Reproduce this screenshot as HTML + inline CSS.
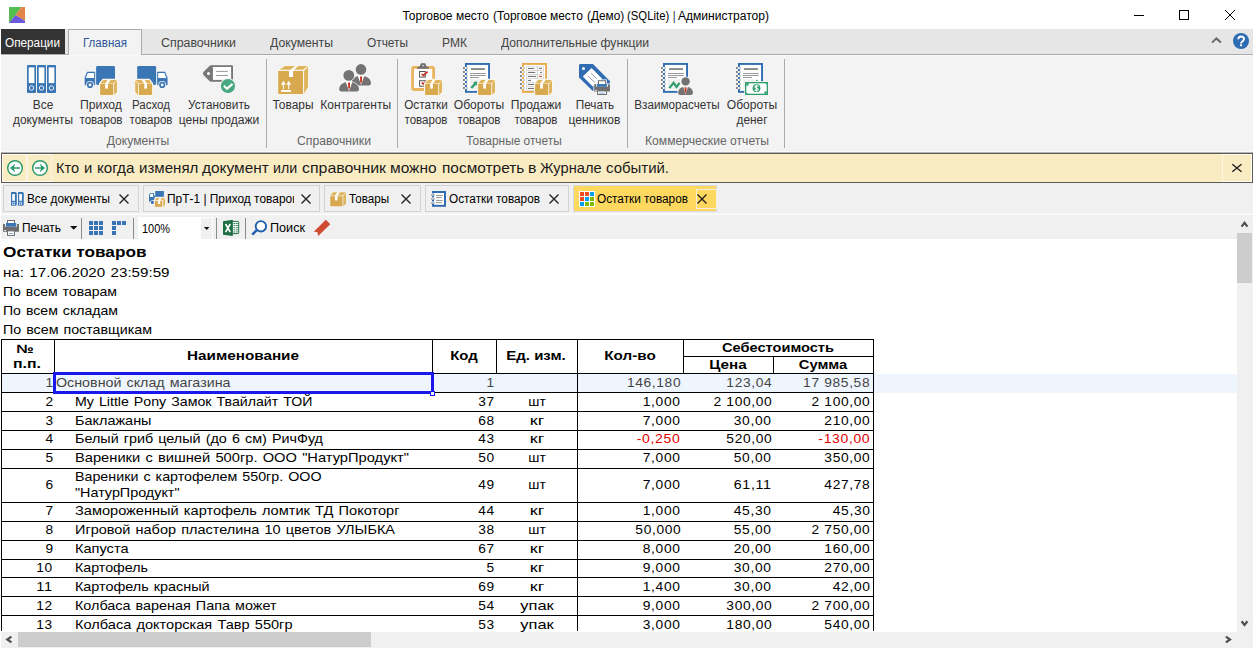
<!DOCTYPE html>
<html><head><meta charset="utf-8"><title>Торговое место</title>
<style>
html,body{margin:0;padding:0;}
body{width:1254px;height:649px;position:relative;overflow:hidden;background:#fff;font-family:"Liberation Sans",sans-serif;}
.a{position:absolute;box-sizing:border-box;}
.t{position:absolute;white-space:pre;font-family:"Liberation Sans",sans-serif;}
svg{position:absolute;overflow:visible;}
</style></head><body>
<svg style="left:9px;top:7px" width="16" height="16" viewBox="0 0 16 16">
<polygon points="0,0 12.5,0 6.5,8 0,16" fill="#53bd4f"/>
<polygon points="12.5,0 16,0 16,14 6.5,8" fill="#e38448"/>
<polygon points="0,16 6.5,8 16,14 16,16" fill="#6a59dc"/>
</svg>
<span class="t" style="top:9px;font-size:12px;line-height:14px;color:#000;left:402.4px;transform-origin:0 0;">Торговое</span>
<span class="t" style="top:9px;font-size:12px;line-height:14px;color:#000;left:455.79999999999995px;transform-origin:0 0;transform:scaleX(0.9949);">место</span>
<span class="t" style="top:9px;font-size:12px;line-height:14px;color:#000;left:492.5px;transform-origin:0 0;transform:scaleX(0.9940);">(Торговое</span>
<span class="t" style="top:9px;font-size:12px;line-height:14px;color:#000;left:549.9px;transform-origin:0 0;">место</span>
<span class="t" style="top:9px;font-size:12px;line-height:14px;color:#000;left:586.6px;transform-origin:0 0;transform:scaleX(0.9862);">(Демо)</span>
<span class="t" style="top:9px;font-size:12px;line-height:14px;color:#000;left:627.1999999999999px;transform-origin:0 0;transform:scaleX(0.9466);">(SQLite)</span>
<span class="t" style="top:9px;font-size:12px;line-height:14px;color:#000;left:672.6999999999999px;transform-origin:0 0;transform:scaleX(0.7680);">|</span>
<span class="t" style="top:9px;font-size:12px;line-height:14px;color:#000;left:677.9px;transform-origin:0 0;transform:scaleX(1.0047);">Администратор)</span>
<svg style="left:1130px;top:5px" width="120" height="22" viewBox="0 0 120 22" fill="none" stroke="#000" stroke-width="1">
<path d="M4 10.5H14"/><rect x="49.5" y="5.5" width="9" height="9"/><path d="M95 5L105 15M105 5L95 15"/></svg>
<div class="a" style="left:1px;top:29px;width:1252px;height:25px;background:#e6e6e6;"></div>
<div class="a" style="left:1px;top:54px;width:1252px;height:1px;background:#ababab;"></div>
<div class="a" style="left:1px;top:55px;width:1252px;height:97px;background:#f3f3f3;"></div>
<div class="a" style="left:1px;top:55px;width:1252px;height:1px;background:#f9f9f9;"></div>
<div class="a" style="left:1px;top:151px;width:1252px;height:1px;background:#fafafa;"></div>
<div class="a" style="left:1px;top:29px;width:64px;height:25px;background:#333333;"></div>
<span class="t" style="top:36px;font-size:12px;line-height:14px;color:#fff;left:5px;transform-origin:0 0;transform:scaleX(0.9797);">Операции</span>
<div class="a" style="left:68px;top:29px;width:74px;height:26px;background:#f3f3f3;border:1px solid #ababab;border-bottom:none;"></div>
<span class="t" style="top:36px;font-size:12px;line-height:14px;color:#2b579a;left:83px;transform-origin:0 0;transform:scaleX(0.9631);">Главная</span>
<span class="t" style="top:36px;font-size:12px;line-height:14px;color:#444;left:161px;transform-origin:0 0;transform:scaleX(1.0316);">Справочники</span>
<span class="t" style="top:36px;font-size:12px;line-height:14px;color:#444;left:269.5px;transform-origin:0 0;transform:scaleX(1.0184);">Документы</span>
<span class="t" style="top:36px;font-size:12px;line-height:14px;color:#444;left:367px;transform-origin:0 0;transform:scaleX(0.9883);">Отчеты</span>
<span class="t" style="top:36px;font-size:12px;line-height:14px;color:#444;left:442px;transform-origin:0 0;transform:scaleX(1.0057);">РМК</span>
<span class="t" style="top:36px;font-size:12px;line-height:14px;color:#444;left:501px;transform-origin:0 0;transform:scaleX(1.0121);">Дополнительные функции</span>
<span class="t" style="top:98px;font-size:12px;line-height:14px;color:#333;left:42.5px;transform-origin:50% 0;transform:translateX(-50%) scaleX(0.9909);">Все</span>
<span class="t" style="top:113px;font-size:12px;line-height:14px;color:#333;left:42.5px;transform-origin:50% 0;transform:translateX(-50%) scaleX(0.9899);">документы</span>
<span class="t" style="top:98px;font-size:12px;line-height:14px;color:#333;left:101.3px;transform-origin:50% 0;transform:translateX(-50%) scaleX(1.0174);">Приход</span>
<span class="t" style="top:113px;font-size:12px;line-height:14px;color:#333;left:101.3px;transform-origin:50% 0;transform:translateX(-50%) scaleX(0.9626);">товаров</span>
<span class="t" style="top:98px;font-size:12px;line-height:14px;color:#333;left:151.3px;transform-origin:50% 0;transform:translateX(-50%) scaleX(0.9605);">Расход</span>
<span class="t" style="top:113px;font-size:12px;line-height:14px;color:#333;left:151.3px;transform-origin:50% 0;transform:translateX(-50%) scaleX(0.9626);">товаров</span>
<span class="t" style="top:98px;font-size:12px;line-height:14px;color:#333;left:219px;transform-origin:50% 0;transform:translateX(-50%) scaleX(0.9844);">Установить</span>
<span class="t" style="top:113px;font-size:12px;line-height:14px;color:#333;left:219px;transform-origin:50% 0;transform:translateX(-50%) scaleX(1.0063);">цены продажи</span>
<span class="t" style="top:98px;font-size:12px;line-height:14px;color:#333;left:293.4px;transform-origin:50% 0;transform:translateX(-50%) scaleX(0.9932);">Товары</span>
<span class="t" style="top:98px;font-size:12px;line-height:14px;color:#333;left:355.7px;transform-origin:50% 0;transform:translateX(-50%);">Контрагенты</span>
<span class="t" style="top:98px;font-size:12px;line-height:14px;color:#333;left:425.8px;transform-origin:50% 0;transform:translateX(-50%) scaleX(0.9762);">Остатки</span>
<span class="t" style="top:113px;font-size:12px;line-height:14px;color:#333;left:425.8px;transform-origin:50% 0;transform:translateX(-50%) scaleX(0.9626);">товаров</span>
<span class="t" style="top:98px;font-size:12px;line-height:14px;color:#333;left:479px;transform-origin:50% 0;transform:translateX(-50%) scaleX(1.0081);">Обороты</span>
<span class="t" style="top:113px;font-size:12px;line-height:14px;color:#333;left:479px;transform-origin:50% 0;transform:translateX(-50%) scaleX(0.9626);">товаров</span>
<span class="t" style="top:98px;font-size:12px;line-height:14px;color:#333;left:536px;transform-origin:50% 0;transform:translateX(-50%) scaleX(1.0075);">Продажи</span>
<span class="t" style="top:113px;font-size:12px;line-height:14px;color:#333;left:536px;transform-origin:50% 0;transform:translateX(-50%) scaleX(0.9626);">товаров</span>
<span class="t" style="top:98px;font-size:12px;line-height:14px;color:#333;left:594.5px;transform-origin:50% 0;transform:translateX(-50%) scaleX(0.9793);">Печать</span>
<span class="t" style="top:113px;font-size:12px;line-height:14px;color:#333;left:594.5px;transform-origin:50% 0;transform:translateX(-50%);">ценников</span>
<span class="t" style="top:98px;font-size:12px;line-height:14px;color:#333;left:677px;transform-origin:50% 0;transform:translateX(-50%) scaleX(0.9752);">Взаиморасчеты</span>
<span class="t" style="top:98px;font-size:12px;line-height:14px;color:#333;left:752.3px;transform-origin:50% 0;transform:translateX(-50%) scaleX(1.0081);">Обороты</span>
<span class="t" style="top:113px;font-size:12px;line-height:14px;color:#333;left:752.3px;transform-origin:50% 0;transform:translateX(-50%) scaleX(0.9885);">денег</span>
<span class="t" style="top:134px;font-size:12px;line-height:14px;color:#666;left:137.8px;transform-origin:50% 0;transform:translateX(-50%) scaleX(1.0104);">Документы</span>
<span class="t" style="top:134px;font-size:12px;line-height:14px;color:#666;left:333.9px;transform-origin:50% 0;transform:translateX(-50%) scaleX(1.0178);">Справочники</span>
<span class="t" style="top:134px;font-size:12px;line-height:14px;color:#666;left:514px;transform-origin:50% 0;transform:translateX(-50%) scaleX(0.9900);">Товарные отчеты</span>
<span class="t" style="top:134px;font-size:12px;line-height:14px;color:#666;left:707.3px;transform-origin:50% 0;transform:translateX(-50%) scaleX(1.0106);">Коммерческие отчеты</span>
<div class="a" style="left:266px;top:59px;width:1px;height:89px;background:#ababab;"></div>
<div class="a" style="left:397px;top:59px;width:1px;height:89px;background:#ababab;"></div>
<div class="a" style="left:627px;top:59px;width:1px;height:89px;background:#ababab;"></div>
<div class="a" style="left:784px;top:59px;width:1px;height:89px;background:#ababab;"></div>
<div class="a" style="left:1px;top:152px;width:1252px;height:1px;background:#b5b5b5;"></div>
<div class="a" style="left:1px;top:153px;width:1252px;height:30px;background:#faecc2;border:1px solid #5a5a5a;"></div>
<div class="a" style="left:2px;top:154px;width:1250px;height:28px;border:1px solid #fffdf5;"></div>
<div class="a" style="left:26px;top:154px;width:2px;height:28px;background:#f8f3e4;"></div>
<div class="a" style="left:51px;top:154px;width:1px;height:28px;background:#f8f3e4;"></div>
<div class="a" style="left:52px;top:154px;width:1170px;height:1px;background:#fbedc4;"></div>
<div class="a" style="left:52px;top:181px;width:1170px;height:1px;background:#fbedc4;"></div>
<div class="a" style="left:1222px;top:155px;width:1px;height:26px;background:#fdf6e0;"></div>
<span class="t" style="top:160px;font-size:14.5px;line-height:16px;color:#1a1a1a;left:56.3px;transform-origin:0 0;transform:scaleX(1.0043);">Кто</span>
<span class="t" style="top:160px;font-size:14.5px;line-height:16px;color:#1a1a1a;left:84.4px;transform-origin:0 0;transform:scaleX(1.0235);">и</span>
<span class="t" style="top:160px;font-size:14.5px;line-height:16px;color:#1a1a1a;left:97.4px;transform-origin:0 0;transform:scaleX(1.0466);">когда</span>
<span class="t" style="top:160px;font-size:14.5px;line-height:16px;color:#1a1a1a;left:139.20000000000002px;transform-origin:0 0;transform:scaleX(1.0401);">изменял</span>
<span class="t" style="top:160px;font-size:14.5px;line-height:16px;color:#1a1a1a;left:202.0px;transform-origin:0 0;transform:scaleX(1.0635);">документ</span>
<span class="t" style="top:160px;font-size:14.5px;line-height:16px;color:#1a1a1a;left:273.4px;transform-origin:0 0;transform:scaleX(0.9809);">или</span>
<span class="t" style="top:160px;font-size:14.5px;line-height:16px;color:#1a1a1a;left:302.0px;transform-origin:0 0;transform:scaleX(1.0989);">справочник</span>
<span class="t" style="top:160px;font-size:14.5px;line-height:16px;color:#1a1a1a;left:390.0px;transform-origin:0 0;transform:scaleX(1.0674);">можно</span>
<span class="t" style="top:160px;font-size:14.5px;line-height:16px;color:#1a1a1a;left:441.59999999999997px;transform-origin:0 0;transform:scaleX(1.0637);">посмотреть</span>
<span class="t" style="top:160px;font-size:14.5px;line-height:16px;color:#1a1a1a;left:528.3px;transform-origin:0 0;transform:scaleX(1.0905);">в</span>
<span class="t" style="top:160px;font-size:14.5px;line-height:16px;color:#1a1a1a;left:540.1px;transform-origin:0 0;transform:scaleX(1.0101);">Журнале</span>
<span class="t" style="top:160px;font-size:14.5px;line-height:16px;color:#1a1a1a;left:606.4px;transform-origin:0 0;transform:scaleX(1.0315);">событий.</span>
<div class="a" style="left:1px;top:183px;width:1252px;height:31px;background:#f0f0f0;"></div>
<div class="a" style="left:1px;top:213px;width:1252px;height:1px;background:#f5f5f5;"></div>
<div class="a" style="left:1px;top:214px;width:1252px;height:1px;background:#fdfdfd;"></div>
<div class="a" style="left:3px;top:185px;width:136px;height:27px;background:#f0f0f0;border:1px solid #d2d2d2;"></div>
<span class="t" style="top:192px;font-size:12px;line-height:14px;color:#000;left:27px;transform-origin:0 0;transform:scaleX(0.9810);">Все документы</span>
<svg style="left:119px;top:194px" width="10" height="10" viewBox="0 0 10 10"><path d="M0.5 0.5L9.5 9.5M9.5 0.5L0.5 9.5" stroke="#222" stroke-width="1.4" fill="none"/></svg>
<div class="a" style="left:143px;top:185px;width:177px;height:27px;background:#f0f0f0;border:1px solid #d2d2d2;"></div>
<div class="a" style="left:0;top:186px;width:294.4px;height:25px;overflow:hidden">
<span class="t" style="top:6px;font-size:12px;line-height:14px;color:#000;left:167px;transform-origin:0 0;transform:scaleX(0.9934);">ПрТ-1 | Приход товаров</span>
</div>
<svg style="left:301px;top:194px" width="10" height="10" viewBox="0 0 10 10"><path d="M0.5 0.5L9.5 9.5M9.5 0.5L0.5 9.5" stroke="#222" stroke-width="1.4" fill="none"/></svg>
<div class="a" style="left:324px;top:185px;width:97px;height:27px;background:#f0f0f0;border:1px solid #d2d2d2;"></div>
<span class="t" style="top:192px;font-size:12px;line-height:14px;color:#000;left:349px;transform-origin:0 0;transform:scaleX(0.9690);">Товары</span>
<svg style="left:401px;top:194px" width="10" height="10" viewBox="0 0 10 10"><path d="M0.5 0.5L9.5 9.5M9.5 0.5L0.5 9.5" stroke="#222" stroke-width="1.4" fill="none"/></svg>
<div class="a" style="left:425px;top:185px;width:144px;height:27px;background:#f0f0f0;border:1px solid #d2d2d2;"></div>
<span class="t" style="top:192px;font-size:12px;line-height:14px;color:#000;left:449px;transform-origin:0 0;transform:scaleX(0.9831);">Остатки товаров</span>
<svg style="left:549px;top:194px" width="10" height="10" viewBox="0 0 10 10"><path d="M0.5 0.5L9.5 9.5M9.5 0.5L0.5 9.5" stroke="#222" stroke-width="1.4" fill="none"/></svg>
<div class="a" style="left:573px;top:185px;width:144px;height:27px;background:#ffd95f;border:1px solid #d6d9de;"></div>
<div class="a" style="left:696px;top:189px;width:21px;height:20px;border:1px solid #f5eeda;"></div>
<span class="t" style="top:192px;font-size:12px;line-height:14px;color:#000;left:597px;transform-origin:0 0;transform:scaleX(0.9831);">Остатки товаров</span>
<svg style="left:697px;top:194px" width="10" height="10" viewBox="0 0 10 10"><path d="M0.5 0.5L9.5 9.5M9.5 0.5L0.5 9.5" stroke="#222" stroke-width="1.4" fill="none"/></svg>
<div class="a" style="left:1px;top:215px;width:1236px;height:24px;background:#f0f0f0;"></div>
<span class="t" style="top:221px;font-size:12px;line-height:14px;color:#000;left:22px;transform-origin:0 0;transform:scaleX(0.9921);">Печать</span>
<div class="a" style="left:81px;top:218px;width:1px;height:21px;background:#8c8c8c;"></div>
<div class="a" style="left:133px;top:218px;width:1px;height:21px;background:#8c8c8c;"></div>
<div class="a" style="left:216px;top:218px;width:1px;height:21px;background:#8c8c8c;"></div>
<div class="a" style="left:245px;top:218px;width:1px;height:21px;background:#8c8c8c;"></div>
<div class="a" style="left:138px;top:217px;width:75px;height:22px;background:#fff;"></div>
<span class="t" style="top:222px;font-size:12.4px;line-height:14px;color:#000;left:142.4px;transform-origin:0 0;transform:scaleX(0.8832);">100%</span>
<span class="t" style="top:221px;font-size:12px;line-height:14px;color:#000;left:270px;transform-origin:0 0;transform:scaleX(1.0521);">Поиск</span>
<div class="a" style="left:1px;top:240px;width:1236px;height:392px;background:#fff;"></div>
<div class="a" style="left:1237px;top:215px;width:16px;height:433px;background:#f0f0f0;"></div>
<div class="a" style="left:1px;top:632px;width:1236px;height:16px;background:#f0f0f0;"></div>
<div class="a" style="left:1237px;top:233px;width:15px;height:50px;background:#cdcdcd;"></div>
<div class="a" style="left:18px;top:632px;width:353px;height:15px;background:#cdcdcd;"></div>
<span class="t" style="top:244px;font-size:14px;line-height:16px;color:#000;font-weight:700;left:3px;transform-origin:0 0;transform:scaleX(1.2283);">Остатки товаров</span>
<span class="t" style="top:265px;font-size:13px;line-height:15px;color:#000;word-spacing:1px;left:3px;transform-origin:0 0;transform:scaleX(1.1650);">на: 17.06.2020 23:59:59</span>
<span class="t" style="top:284px;font-size:13px;line-height:15px;color:#000;word-spacing:1px;left:3px;transform-origin:0 0;transform:scaleX(1.0790);">По всем товарам</span>
<span class="t" style="top:303px;font-size:13px;line-height:15px;color:#000;word-spacing:1px;left:3px;transform-origin:0 0;transform:scaleX(1.0835);">По всем складам</span>
<span class="t" style="top:322px;font-size:13px;line-height:15px;color:#000;word-spacing:1px;left:3px;transform-origin:0 0;transform:scaleX(1.0952);">По всем поставщикам</span>
<div class="a" style="left:2px;top:374px;width:1235px;height:19px;background:#eff5fd;"></div>
<div class="a" style="left:1px;top:339px;width:873px;height:1px;background:#000;"></div>
<div class="a" style="left:1px;top:373px;width:873px;height:1px;background:#000;"></div>
<div class="a" style="left:1px;top:392px;width:873px;height:1px;background:#000;"></div>
<div class="a" style="left:1px;top:411px;width:873px;height:1px;background:#000;"></div>
<div class="a" style="left:1px;top:430px;width:873px;height:1px;background:#000;"></div>
<div class="a" style="left:1px;top:449px;width:873px;height:1px;background:#000;"></div>
<div class="a" style="left:1px;top:468px;width:873px;height:1px;background:#000;"></div>
<div class="a" style="left:1px;top:502px;width:873px;height:1px;background:#000;"></div>
<div class="a" style="left:1px;top:521px;width:873px;height:1px;background:#000;"></div>
<div class="a" style="left:1px;top:540px;width:873px;height:1px;background:#000;"></div>
<div class="a" style="left:1px;top:559px;width:873px;height:1px;background:#000;"></div>
<div class="a" style="left:1px;top:577px;width:873px;height:1px;background:#000;"></div>
<div class="a" style="left:1px;top:596px;width:873px;height:1px;background:#000;"></div>
<div class="a" style="left:1px;top:615px;width:873px;height:1px;background:#000;"></div>
<div class="a" style="left:683px;top:356px;width:191px;height:1px;background:#000;"></div>
<div class="a" style="left:1px;top:339px;width:1px;height:292px;background:#000;"></div>
<div class="a" style="left:577px;top:339px;width:1px;height:292px;background:#000;"></div>
<div class="a" style="left:873px;top:339px;width:1px;height:292px;background:#000;"></div>
<div class="a" style="left:54px;top:339px;width:1px;height:35px;background:#000;"></div>
<div class="a" style="left:432px;top:339px;width:1px;height:35px;background:#000;"></div>
<div class="a" style="left:496px;top:339px;width:1px;height:35px;background:#000;"></div>
<div class="a" style="left:683px;top:339px;width:1px;height:35px;background:#000;"></div>
<div class="a" style="left:773px;top:356px;width:1px;height:18px;background:#000;"></div>
<span class="t" style="top:342px;font-size:12px;line-height:14px;color:#000;font-weight:700;left:24.7px;transform-origin:50% 0;transform:translateX(-50%) scaleX(1.3069);">№</span>
<span class="t" style="top:357px;font-size:12px;line-height:14px;color:#000;font-weight:700;left:26.8px;transform-origin:50% 0;transform:translateX(-50%) scaleX(1.3225);">п.п.</span>
<span class="t" style="top:349px;font-size:12px;line-height:14px;color:#000;font-weight:700;left:243.3px;transform-origin:50% 0;transform:translateX(-50%) scaleX(1.2720);">Наименование</span>
<span class="t" style="top:349px;font-size:12px;line-height:14px;color:#000;font-weight:700;left:464.2px;transform-origin:50% 0;transform:translateX(-50%) scaleX(1.2429);">Код</span>
<span class="t" style="top:349px;font-size:12px;line-height:14px;color:#000;font-weight:700;left:536.3px;transform-origin:50% 0;transform:translateX(-50%) scaleX(1.2514);">Ед. изм.</span>
<span class="t" style="top:349px;font-size:12px;line-height:14px;color:#000;font-weight:700;left:630.3px;transform-origin:50% 0;transform:translateX(-50%) scaleX(1.2706);">Кол-во</span>
<span class="t" style="top:341px;font-size:12px;line-height:14px;color:#000;font-weight:700;left:777.8px;transform-origin:50% 0;transform:translateX(-50%) scaleX(1.2170);">Себестоимость</span>
<span class="t" style="top:358px;font-size:12px;line-height:14px;color:#000;font-weight:700;left:728.2px;transform-origin:50% 0;transform:translateX(-50%) scaleX(1.2705);">Цена</span>
<span class="t" style="top:358px;font-size:12px;line-height:14px;color:#000;font-weight:700;left:822.7px;transform-origin:50% 0;transform:translateX(-50%) scaleX(1.2293);">Сумма</span>
<span class="t" style="top:375px;font-size:13px;line-height:15px;color:#444;letter-spacing:0.6px;right:1200.6665738375063px;transform-origin:100% 0;transform:scaleX(1.0536);">1</span>
<span class="t" style="top:375px;font-size:13px;line-height:15px;color:#444;word-spacing:1px;left:56.4px;transform-origin:0 0;transform:scaleX(1.0981);">Основной склад магазина</span>
<span class="t" style="top:375px;font-size:13px;line-height:15px;color:#444;letter-spacing:0.6px;right:759.6665738375063px;transform-origin:100% 0;transform:scaleX(1.0536);">1</span>
<span class="t" style="top:375px;font-size:13px;line-height:15px;color:#444;letter-spacing:0.6px;right:573.0632839670197px;transform-origin:100% 0;transform:scaleX(1.0608);">146,180</span>
<span class="t" style="top:375px;font-size:13px;line-height:15px;color:#444;letter-spacing:0.6px;right:482.06268994787104px;transform-origin:100% 0;transform:scaleX(1.0617);">123,04</span>
<span class="t" style="top:375px;font-size:13px;line-height:15px;color:#444;letter-spacing:0.6px;right:383.7627524357839px;transform-origin:100% 0;transform:scaleX(1.0619);">17 985,58</span>
<span class="t" style="top:394px;font-size:13px;line-height:15px;color:#000;letter-spacing:0.6px;right:1200.6665738375063px;transform-origin:100% 0;transform:scaleX(1.0536);">2</span>
<span class="t" style="top:394px;font-size:13px;line-height:15px;color:#000;word-spacing:1px;left:75px;transform-origin:0 0;transform:scaleX(1.0900);">My Little Pony Замок Твайлайт ТОЙ</span>
<span class="t" style="top:394px;font-size:13px;line-height:15px;color:#000;letter-spacing:0.6px;right:759.6665738375063px;transform-origin:100% 0;transform:scaleX(1.0546);">37</span>
<span class="t" style="top:394px;font-size:13px;line-height:15px;color:#000;left:536.8px;transform-origin:50% 0;transform:translateX(-50%) scaleX(1.0677);">шт</span>
<span class="t" style="top:394px;font-size:13px;line-height:15px;color:#000;letter-spacing:0.6px;right:573.061834149637px;transform-origin:100% 0;transform:scaleX(1.0630);">1,000</span>
<span class="t" style="top:394px;font-size:13px;line-height:15px;color:#000;letter-spacing:0.6px;right:482.06221243411085px;transform-origin:100% 0;transform:scaleX(1.0628);">2 100,00</span>
<span class="t" style="top:394px;font-size:13px;line-height:15px;color:#000;letter-spacing:0.6px;right:383.7622124341108px;transform-origin:100% 0;transform:scaleX(1.0628);">2 100,00</span>
<span class="t" style="top:413px;font-size:13px;line-height:15px;color:#000;letter-spacing:0.6px;right:1200.6665738375063px;transform-origin:100% 0;transform:scaleX(1.0536);">3</span>
<span class="t" style="top:413px;font-size:13px;line-height:15px;color:#000;word-spacing:1px;left:75px;transform-origin:0 0;transform:scaleX(1.1110);">Баклажаны</span>
<span class="t" style="top:413px;font-size:13px;line-height:15px;color:#000;letter-spacing:0.6px;right:759.6665738375063px;transform-origin:100% 0;transform:scaleX(1.0546);">68</span>
<span class="t" style="top:413px;font-size:13px;line-height:15px;color:#000;left:536.8px;transform-origin:50% 0;transform:translateX(-50%) scaleX(1.3892);">кг</span>
<span class="t" style="top:413px;font-size:13px;line-height:15px;color:#000;letter-spacing:0.6px;right:573.061834149637px;transform-origin:100% 0;transform:scaleX(1.0630);">7,000</span>
<span class="t" style="top:413px;font-size:13px;line-height:15px;color:#000;letter-spacing:0.6px;right:482.061834149637px;transform-origin:100% 0;transform:scaleX(1.0630);">30,00</span>
<span class="t" style="top:413px;font-size:13px;line-height:15px;color:#000;letter-spacing:0.6px;right:383.76268994787097px;transform-origin:100% 0;transform:scaleX(1.0617);">210,00</span>
<span class="t" style="top:431px;font-size:13px;line-height:15px;color:#000;letter-spacing:0.6px;right:1200.6665738375063px;transform-origin:100% 0;transform:scaleX(1.0536);">4</span>
<span class="t" style="top:431px;font-size:13px;line-height:15px;color:#000;word-spacing:1px;left:75px;transform-origin:0 0;transform:scaleX(1.1044);">Белый гриб целый (до 6 см) РичФуд</span>
<span class="t" style="top:431px;font-size:13px;line-height:15px;color:#000;letter-spacing:0.6px;right:759.6665738375063px;transform-origin:100% 0;transform:scaleX(1.0546);">43</span>
<span class="t" style="top:431px;font-size:13px;line-height:15px;color:#000;left:536.8px;transform-origin:50% 0;transform:translateX(-50%) scaleX(1.3892);">кг</span>
<span class="t" style="top:431px;font-size:13px;line-height:15px;color:#e00000;letter-spacing:0.6px;right:573.0520341119764px;transform-origin:100% 0;transform:scaleX(1.0796);">-0,250</span>
<span class="t" style="top:431px;font-size:13px;line-height:15px;color:#000;letter-spacing:0.6px;right:482.06268994787104px;transform-origin:100% 0;transform:scaleX(1.0617);">520,00</span>
<span class="t" style="top:431px;font-size:13px;line-height:15px;color:#e00000;letter-spacing:0.6px;right:383.7543914007px;transform-origin:100% 0;transform:scaleX(1.0757);">-130,00</span>
<span class="t" style="top:450px;font-size:13px;line-height:15px;color:#000;letter-spacing:0.6px;right:1200.6665738375063px;transform-origin:100% 0;transform:scaleX(1.0536);">5</span>
<span class="t" style="top:450px;font-size:13px;line-height:15px;color:#000;word-spacing:1px;left:75px;transform-origin:0 0;transform:scaleX(1.1290);">Вареники с вишней 500гр. ООО &quot;НатурПродукт&quot;</span>
<span class="t" style="top:450px;font-size:13px;line-height:15px;color:#000;letter-spacing:0.6px;right:759.6665738375063px;transform-origin:100% 0;transform:scaleX(1.0546);">50</span>
<span class="t" style="top:450px;font-size:13px;line-height:15px;color:#000;left:536.8px;transform-origin:50% 0;transform:translateX(-50%) scaleX(1.0677);">шт</span>
<span class="t" style="top:450px;font-size:13px;line-height:15px;color:#000;letter-spacing:0.6px;right:573.061834149637px;transform-origin:100% 0;transform:scaleX(1.0630);">7,000</span>
<span class="t" style="top:450px;font-size:13px;line-height:15px;color:#000;letter-spacing:0.6px;right:482.061834149637px;transform-origin:100% 0;transform:scaleX(1.0630);">50,00</span>
<span class="t" style="top:450px;font-size:13px;line-height:15px;color:#000;letter-spacing:0.6px;right:383.76268994787097px;transform-origin:100% 0;transform:scaleX(1.0617);">350,00</span>
<span class="t" style="top:477px;font-size:13px;line-height:15px;color:#000;letter-spacing:0.6px;right:1200.6665738375063px;transform-origin:100% 0;transform:scaleX(1.0536);">6</span>
<span class="t" style="top:469px;font-size:13px;line-height:15px;color:#000;word-spacing:1px;left:75px;transform-origin:0 0;transform:scaleX(1.0968);">Вареники с картофелем 550гр. ООО</span>
<span class="t" style="top:485px;font-size:13px;line-height:15px;color:#000;word-spacing:1px;left:75px;transform-origin:0 0;transform:scaleX(1.1042);">&quot;НатурПродукт&quot;</span>
<span class="t" style="top:477px;font-size:13px;line-height:15px;color:#000;letter-spacing:0.6px;right:759.6665738375063px;transform-origin:100% 0;transform:scaleX(1.0546);">49</span>
<span class="t" style="top:477px;font-size:13px;line-height:15px;color:#000;left:536.8px;transform-origin:50% 0;transform:translateX(-50%) scaleX(1.0677);">шт</span>
<span class="t" style="top:477px;font-size:13px;line-height:15px;color:#000;letter-spacing:0.6px;right:573.061834149637px;transform-origin:100% 0;transform:scaleX(1.0630);">7,000</span>
<span class="t" style="top:477px;font-size:13px;line-height:15px;color:#000;letter-spacing:0.6px;right:482.061834149637px;transform-origin:100% 0;transform:scaleX(1.0928);">61,11</span>
<span class="t" style="top:477px;font-size:13px;line-height:15px;color:#000;letter-spacing:0.6px;right:383.76268994787097px;transform-origin:100% 0;transform:scaleX(1.0617);">427,78</span>
<span class="t" style="top:503px;font-size:13px;line-height:15px;color:#000;letter-spacing:0.6px;right:1200.6665738375063px;transform-origin:100% 0;transform:scaleX(1.0536);">7</span>
<span class="t" style="top:503px;font-size:13px;line-height:15px;color:#000;word-spacing:1px;left:75px;transform-origin:0 0;transform:scaleX(1.1212);">Замороженный картофель ломтик ТД Покоторг</span>
<span class="t" style="top:503px;font-size:13px;line-height:15px;color:#000;letter-spacing:0.6px;right:759.6665738375063px;transform-origin:100% 0;transform:scaleX(1.0546);">44</span>
<span class="t" style="top:503px;font-size:13px;line-height:15px;color:#000;left:536.8px;transform-origin:50% 0;transform:translateX(-50%) scaleX(1.3892);">кг</span>
<span class="t" style="top:503px;font-size:13px;line-height:15px;color:#000;letter-spacing:0.6px;right:573.061834149637px;transform-origin:100% 0;transform:scaleX(1.0630);">1,000</span>
<span class="t" style="top:503px;font-size:13px;line-height:15px;color:#000;letter-spacing:0.6px;right:482.061834149637px;transform-origin:100% 0;transform:scaleX(1.0630);">45,30</span>
<span class="t" style="top:503px;font-size:13px;line-height:15px;color:#000;letter-spacing:0.6px;right:383.7618341496369px;transform-origin:100% 0;transform:scaleX(1.0630);">45,30</span>
<span class="t" style="top:522px;font-size:13px;line-height:15px;color:#000;letter-spacing:0.6px;right:1200.6665738375063px;transform-origin:100% 0;transform:scaleX(1.0536);">8</span>
<span class="t" style="top:522px;font-size:13px;line-height:15px;color:#000;word-spacing:1px;left:75px;transform-origin:0 0;transform:scaleX(1.1132);">Игровой набор пластелина 10 цветов УЛЫБКА</span>
<span class="t" style="top:522px;font-size:13px;line-height:15px;color:#000;letter-spacing:0.6px;right:759.6665738375063px;transform-origin:100% 0;transform:scaleX(1.0546);">38</span>
<span class="t" style="top:522px;font-size:13px;line-height:15px;color:#000;left:536.8px;transform-origin:50% 0;transform:translateX(-50%) scaleX(1.0677);">шт</span>
<span class="t" style="top:522px;font-size:13px;line-height:15px;color:#000;letter-spacing:0.6px;right:573.062689947871px;transform-origin:100% 0;transform:scaleX(1.0617);">50,000</span>
<span class="t" style="top:522px;font-size:13px;line-height:15px;color:#000;letter-spacing:0.6px;right:482.061834149637px;transform-origin:100% 0;transform:scaleX(1.0630);">55,00</span>
<span class="t" style="top:522px;font-size:13px;line-height:15px;color:#000;letter-spacing:0.6px;right:383.7622124341108px;transform-origin:100% 0;transform:scaleX(1.0628);">2 750,00</span>
<span class="t" style="top:541px;font-size:13px;line-height:15px;color:#000;letter-spacing:0.6px;right:1200.6665738375063px;transform-origin:100% 0;transform:scaleX(1.0536);">9</span>
<span class="t" style="top:541px;font-size:13px;line-height:15px;color:#000;word-spacing:1px;left:75px;transform-origin:0 0;transform:scaleX(1.1208);">Капуста</span>
<span class="t" style="top:541px;font-size:13px;line-height:15px;color:#000;letter-spacing:0.6px;right:759.6665738375063px;transform-origin:100% 0;transform:scaleX(1.0546);">67</span>
<span class="t" style="top:541px;font-size:13px;line-height:15px;color:#000;left:536.8px;transform-origin:50% 0;transform:translateX(-50%) scaleX(1.3892);">кг</span>
<span class="t" style="top:541px;font-size:13px;line-height:15px;color:#000;letter-spacing:0.6px;right:573.061834149637px;transform-origin:100% 0;transform:scaleX(1.0630);">8,000</span>
<span class="t" style="top:541px;font-size:13px;line-height:15px;color:#000;letter-spacing:0.6px;right:482.061834149637px;transform-origin:100% 0;transform:scaleX(1.0630);">20,00</span>
<span class="t" style="top:541px;font-size:13px;line-height:15px;color:#000;letter-spacing:0.6px;right:383.76268994787097px;transform-origin:100% 0;transform:scaleX(1.0617);">160,00</span>
<span class="t" style="top:560px;font-size:13px;line-height:15px;color:#000;letter-spacing:0.6px;right:1201.6665738375063px;transform-origin:100% 0;transform:scaleX(1.0546);">10</span>
<span class="t" style="top:560px;font-size:13px;line-height:15px;color:#000;word-spacing:1px;left:75px;transform-origin:0 0;transform:scaleX(1.0954);">Картофель</span>
<span class="t" style="top:560px;font-size:13px;line-height:15px;color:#000;letter-spacing:0.6px;right:759.6665738375063px;transform-origin:100% 0;transform:scaleX(1.0536);">5</span>
<span class="t" style="top:560px;font-size:13px;line-height:15px;color:#000;left:536.8px;transform-origin:50% 0;transform:translateX(-50%) scaleX(1.3892);">кг</span>
<span class="t" style="top:560px;font-size:13px;line-height:15px;color:#000;letter-spacing:0.6px;right:573.061834149637px;transform-origin:100% 0;transform:scaleX(1.0630);">9,000</span>
<span class="t" style="top:560px;font-size:13px;line-height:15px;color:#000;letter-spacing:0.6px;right:482.061834149637px;transform-origin:100% 0;transform:scaleX(1.0630);">30,00</span>
<span class="t" style="top:560px;font-size:13px;line-height:15px;color:#000;letter-spacing:0.6px;right:383.76268994787097px;transform-origin:100% 0;transform:scaleX(1.0617);">270,00</span>
<span class="t" style="top:579px;font-size:13px;line-height:15px;color:#000;letter-spacing:0.6px;right:1201.6665738375063px;transform-origin:100% 0;transform:scaleX(1.1241);">11</span>
<span class="t" style="top:579px;font-size:13px;line-height:15px;color:#000;word-spacing:1px;left:75px;transform-origin:0 0;transform:scaleX(1.1053);">Картофель красный</span>
<span class="t" style="top:579px;font-size:13px;line-height:15px;color:#000;letter-spacing:0.6px;right:759.6665738375063px;transform-origin:100% 0;transform:scaleX(1.0546);">69</span>
<span class="t" style="top:579px;font-size:13px;line-height:15px;color:#000;left:536.8px;transform-origin:50% 0;transform:translateX(-50%) scaleX(1.3892);">кг</span>
<span class="t" style="top:579px;font-size:13px;line-height:15px;color:#000;letter-spacing:0.6px;right:573.061834149637px;transform-origin:100% 0;transform:scaleX(1.0630);">1,400</span>
<span class="t" style="top:579px;font-size:13px;line-height:15px;color:#000;letter-spacing:0.6px;right:482.061834149637px;transform-origin:100% 0;transform:scaleX(1.0630);">30,00</span>
<span class="t" style="top:579px;font-size:13px;line-height:15px;color:#000;letter-spacing:0.6px;right:383.7618341496369px;transform-origin:100% 0;transform:scaleX(1.0630);">42,00</span>
<span class="t" style="top:598px;font-size:13px;line-height:15px;color:#000;letter-spacing:0.6px;right:1201.6665738375063px;transform-origin:100% 0;transform:scaleX(1.0546);">12</span>
<span class="t" style="top:598px;font-size:13px;line-height:15px;color:#000;word-spacing:1px;left:75px;transform-origin:0 0;transform:scaleX(1.1055);">Колбаса вареная Папа может</span>
<span class="t" style="top:598px;font-size:13px;line-height:15px;color:#000;letter-spacing:0.6px;right:759.6665738375063px;transform-origin:100% 0;transform:scaleX(1.0546);">54</span>
<span class="t" style="top:598px;font-size:13px;line-height:15px;color:#000;left:536.8px;transform-origin:50% 0;transform:translateX(-50%) scaleX(1.2656);">упак</span>
<span class="t" style="top:598px;font-size:13px;line-height:15px;color:#000;letter-spacing:0.6px;right:573.061834149637px;transform-origin:100% 0;transform:scaleX(1.0630);">9,000</span>
<span class="t" style="top:598px;font-size:13px;line-height:15px;color:#000;letter-spacing:0.6px;right:482.06268994787104px;transform-origin:100% 0;transform:scaleX(1.0617);">300,00</span>
<span class="t" style="top:598px;font-size:13px;line-height:15px;color:#000;letter-spacing:0.6px;right:383.7622124341108px;transform-origin:100% 0;transform:scaleX(1.0628);">2 700,00</span>
<span class="t" style="top:617px;font-size:13px;line-height:15px;color:#000;letter-spacing:0.6px;right:1201.6665738375063px;transform-origin:100% 0;transform:scaleX(1.0546);">13</span>
<span class="t" style="top:617px;font-size:13px;line-height:15px;color:#000;word-spacing:1px;left:75px;transform-origin:0 0;transform:scaleX(1.1206);">Колбаса докторская Тавр 550гр</span>
<span class="t" style="top:617px;font-size:13px;line-height:15px;color:#000;letter-spacing:0.6px;right:759.6665738375063px;transform-origin:100% 0;transform:scaleX(1.0546);">53</span>
<span class="t" style="top:617px;font-size:13px;line-height:15px;color:#000;left:536.8px;transform-origin:50% 0;transform:translateX(-50%) scaleX(1.2656);">упак</span>
<span class="t" style="top:617px;font-size:13px;line-height:15px;color:#000;letter-spacing:0.6px;right:573.061834149637px;transform-origin:100% 0;transform:scaleX(1.0630);">3,000</span>
<span class="t" style="top:617px;font-size:13px;line-height:15px;color:#000;letter-spacing:0.6px;right:482.06268994787104px;transform-origin:100% 0;transform:scaleX(1.0617);">180,00</span>
<span class="t" style="top:617px;font-size:13px;line-height:15px;color:#000;letter-spacing:0.6px;right:383.76268994787097px;transform-origin:100% 0;transform:scaleX(1.0617);">540,00</span>
<div class="a" style="left:53px;top:372px;width:381px;height:22px;border:3px solid #1818ec;"></div>
<div class="a" style="left:430px;top:391px;width:5px;height:5px;background:#eff5fd;border:1px solid #1818ec;"></div>
<div class="a" style="left:1px;top:632px;width:1236px;height:16px;background:#f0f0f0;"></div>
<div class="a" style="left:18px;top:632px;width:353px;height:15px;background:#cdcdcd;"></div>
<svg style="left:26px;top:63px" width="32" height="32" viewBox="0 0 32 32" ><rect x="1" y="2" width="9" height="28" rx="1" fill="#3b76b4"/><rect x="2.7" y="4.4" width="5.7" height="15.7" fill="#fff"/><circle cx="5.5" cy="25" r="2.2" fill="none" stroke="#e8f0f8" stroke-width="1"/><rect x="11" y="2" width="9" height="28" rx="1" fill="#3b76b4"/><rect x="12.7" y="4.4" width="5.7" height="15.7" fill="#fff"/><circle cx="15.5" cy="25" r="2.2" fill="none" stroke="#e8f0f8" stroke-width="1"/><rect x="21" y="2" width="9" height="28" rx="1" fill="#3b76b4"/><rect x="22.7" y="4.4" width="5.7" height="15.7" fill="#fff"/><circle cx="25.5" cy="25" r="2.2" fill="none" stroke="#e8f0f8" stroke-width="1"/></svg>
<svg style="left:85px;top:63px" width="33" height="33" viewBox="0 0 33 33" ><rect x="11.1" y="2.9" width="18.9" height="19" rx="1.4" fill="#3b76b4"/><path d="M2.3,9 L9.8,9 L9.8,21.9 L0,21.9 L0,14.6 Z" fill="#3b76b4" stroke="#3b76b4" stroke-width="0.6" stroke-linejoin="round"/><polygon points="2.8,10 9,10 9,14.9 0.9,14.9" fill="#fff"/><circle cx="5" cy="21.9" r="3.9" fill="#f3f3f3"/><circle cx="5" cy="21.9" r="3.1" fill="#3b76b4"/><circle cx="5" cy="21.9" r="1.4" fill="#fff"/><g transform="translate(14.8,16.6) scale(1.0)"><path d="M3.2,0 L17.4,0 L17.4,12.4 L14.2,15.5 L0,15.5 L0,3.8 Z" fill="#fbf6ec" stroke="#fbf6ec" stroke-width="1.6" stroke-linejoin="round"/><polygon points="3.4,0.3 16.9,0.3 13.8,3.8 0.4,3.8" fill="#e0b45d"/><rect x="0.3" y="4.5" width="13.1" height="10.8" rx="0.6" fill="#d8a94e"/><polygon points="14.3,4.4 17.2,0.9 17.2,12.3 14.3,15.3" fill="#e0b45d"/><polygon points="7.8,0.3 10.8,0.3 8.2,3.8 5.3,3.8" fill="#fff"/><rect x="5.4" y="3.8" width="2.7" height="5.2" fill="#fff"/></g></svg>
<svg style="left:135px;top:63px" width="33" height="33" viewBox="0 0 33 33" ><g transform="translate(32.2,0) scale(-1,1)"><rect x="11.1" y="2.9" width="18.9" height="19" rx="1.4" fill="#3b76b4"/><path d="M2.3,9 L9.8,9 L9.8,21.9 L0,21.9 L0,14.6 Z" fill="#3b76b4" stroke="#3b76b4" stroke-width="0.6" stroke-linejoin="round"/><polygon points="2.8,10 9,10 9,14.9 0.9,14.9" fill="#fff"/><circle cx="5" cy="21.9" r="3.9" fill="#f3f3f3"/><circle cx="5" cy="21.9" r="3.1" fill="#3b76b4"/><circle cx="5" cy="21.9" r="1.4" fill="#fff"/><g transform="translate(14.8,16.6) scale(1.0)"><path d="M3.2,0 L17.4,0 L17.4,12.4 L14.2,15.5 L0,15.5 L0,3.8 Z" fill="#fbf6ec" stroke="#fbf6ec" stroke-width="1.6" stroke-linejoin="round"/><polygon points="3.4,0.3 16.9,0.3 13.8,3.8 0.4,3.8" fill="#e0b45d"/><rect x="0.3" y="4.5" width="13.1" height="10.8" rx="0.6" fill="#d8a94e"/><polygon points="14.3,4.4 17.2,0.9 17.2,12.3 14.3,15.3" fill="#e0b45d"/><polygon points="7.8,0.3 10.8,0.3 8.2,3.8 5.3,3.8" fill="#fff"/><rect x="5.4" y="3.8" width="2.7" height="5.2" fill="#fff"/></g></g></svg>
<svg style="left:203px;top:63px" width="33" height="33" viewBox="0 0 33 33" ><path d="M0.4,9.1 L6.5,2.9 Q7,2.2 8,2.2 L29,2.2 Q30,2.2 30,3.2 L30,17.7 Q30,18.7 29,18.7 L8,18.7 Q7,18.7 6.5,18 L0.4,11.9 Q-0.5,10.5 0.4,9.1 Z" fill="#777"/><rect x="9.9" y="4" width="18.2" height="12.9" fill="#fff"/><circle cx="5.5" cy="10.5" r="1.5" fill="#fff"/><rect x="13.2" y="7.9" width="11.7" height="1" fill="#9a9a9a"/><rect x="13.2" y="12" width="11.7" height="1" fill="#9a9a9a"/><circle cx="25" cy="23" r="8" fill="#f3f3f3"/><circle cx="25" cy="23" r="7.1" fill="#49a881"/><path d="M20.9,22.8 L24,25.9 L29.5,20.9" fill="none" stroke="#fff" stroke-width="2.1"/></svg>
<svg style="left:277px;top:63px" width="33" height="33" viewBox="0 0 33 33" ><path d="M8,2.5 L31.3,2.5 L31.3,24.3 L26.3,31.3 L1,31.3 L1,7.5 Z" fill="#fbf6ec" stroke="#fbf6ec" stroke-width="1.2" stroke-linejoin="round"/><polygon points="8.2,2.9 30.6,2.9 26,6.7 2.3,6.7" fill="#e0b45d"/><path d="M1.2,8.1 L26,8.1 L26,31 L2.4,31 Q1.2,31 1.2,29.8 Z" fill="#d8a94e"/><polygon points="27.1,8.1 31,3.7 31,24 27.1,30.4" fill="#e0b45d"/><polygon points="18.1,2.9 21.1,2.9 17,7 13.2,7" fill="#fff"/><rect x="12" y="7" width="4.1" height="7" fill="#fff"/><polygon points="6.4,17.8 8.8,21.8 4.0,21.8" fill="#fff"/><rect x="5.8500000000000005" y="21.5" width="1.1" height="4.6" fill="#fff"/><polygon points="11.7,17.8 14.1,21.8 9.299999999999999,21.8" fill="#fff"/><rect x="11.149999999999999" y="21.5" width="1.1" height="4.6" fill="#fff"/><rect x="4.1" y="27" width="9.9" height="1.9" fill="#fff"/></svg>
<svg style="left:339px;top:63px" width="33" height="33" viewBox="0 0 33 33" ><path d="M12.2,20.432000000000002 C12.2,16.39 14.564,14.51 19.291999999999998,13.1 L24.808,13.1 C29.535999999999998,14.51 31.9,16.39 31.9,20.432000000000002 C31.9,21.842 30.521,22.5 28.944999999999997,22.5 L15.155,22.5 C13.578999999999999,22.5 12.2,21.842 12.2,20.432000000000002 Z" fill="#737373"/><circle cx="22" cy="6.4" r="5.3" fill="#737373"/><polygon points="18.700999999999997,12.799999999999999 25.398999999999997,12.799999999999999 22.049999999999997,22.124" fill="#fff"/><polygon points="21.049999999999997,13.6 23.049999999999997,13.6 22.949999999999996,18.27 22.049999999999997,20.996 21.15,18.27" fill="#c9341f"/><path d="M0.2,26.488 C0.2,22.36 2.564,20.44 7.292,19 L12.808,19 C17.535999999999998,20.44 19.9,22.36 19.9,26.488 C19.9,27.928 18.521,28.6 16.944999999999997,28.6 L3.155,28.6 C1.579,28.6 0.2,27.928 0.2,26.488 Z" fill="#f3f3f3" stroke="#f3f3f3" stroke-width="1.6"/><circle cx="9.8" cy="12.4" r="6.2" fill="#f3f3f3"/><path d="M0.2,26.488 C0.2,22.36 2.564,20.44 7.292,19 L12.808,19 C17.535999999999998,20.44 19.9,22.36 19.9,26.488 C19.9,27.928 18.521,28.6 16.944999999999997,28.6 L3.155,28.6 C1.579,28.6 0.2,27.928 0.2,26.488 Z" fill="#737373"/><circle cx="9.8" cy="12.4" r="5.4" fill="#737373"/><polygon points="6.700999999999999,18.7 13.399,18.7 10.049999999999999,28.216" fill="#fff"/><polygon points="9.049999999999999,19.5 11.049999999999999,19.5 10.95,24.28 10.049999999999999,27.064 9.149999999999999,24.28" fill="#c9341f"/></svg>
<svg style="left:410px;top:63px" width="33" height="33" viewBox="0 0 33 33" ><rect x="2.6" y="4.3" width="21" height="22.2" rx="1.2" fill="#fff" stroke="#ebb45e" stroke-width="2.8"/><path d="M11.1,0.2 L15.2,0.2 L16.6,3.6 L19,4.6 L19,5.8 L7,5.8 L7,4.6 L9.6,3.6 Z" fill="#6e6e6e"/><rect x="12.2" y="1.9" width="1.9" height="1.4" fill="#cfcfcf"/><rect x="9.6" y="8.5" width="5.7" height="5.6" fill="#fff" stroke="#555" stroke-width="1"/><rect x="9.6" y="17.7" width="5.7" height="5.5" fill="#fff" stroke="#555" stroke-width="1"/><path d="M11.7,11.1 L13.5,12.4 L17.6,8.7" fill="none" stroke="#c9341f" stroke-width="1.7"/><path d="M11.7,19.6 L13.5,21 L17.6,17.3" fill="none" stroke="#c9341f" stroke-width="1.7"/><g transform="translate(14.8,16.6) scale(1.0)"><path d="M3.2,0 L17.4,0 L17.4,12.4 L14.2,15.5 L0,15.5 L0,3.8 Z" fill="#fbf6ec" stroke="#fbf6ec" stroke-width="1.6" stroke-linejoin="round"/><polygon points="3.4,0.3 16.9,0.3 13.8,3.8 0.4,3.8" fill="#e0b45d"/><rect x="0.3" y="4.5" width="13.1" height="10.8" rx="0.6" fill="#d8a94e"/><polygon points="14.3,4.4 17.2,0.9 17.2,12.3 14.3,15.3" fill="#e0b45d"/><polygon points="7.8,0.3 10.8,0.3 8.2,3.8 5.3,3.8" fill="#fff"/><rect x="5.4" y="3.8" width="2.7" height="5.2" fill="#fff"/></g></svg>
<svg style="left:463px;top:63px" width="33" height="33" viewBox="0 0 33 33" ><rect x="2.95" y="0.95" width="23.1" height="27.9" fill="#fff" stroke="#2f6cb2" stroke-width="1.9"/><rect x="1.9" y="4" width="2.2" height="2" fill="#fff"/><rect x="0" y="4" width="1.9" height="2" fill="#858585"/><rect x="3.2" y="4" width="1.7" height="2" fill="#c9c9c9"/><rect x="1.9" y="8" width="2.2" height="2" fill="#fff"/><rect x="0" y="8" width="1.9" height="2" fill="#858585"/><rect x="3.2" y="8" width="1.7" height="2" fill="#c9c9c9"/><rect x="1.9" y="12" width="2.2" height="2" fill="#fff"/><rect x="0" y="12" width="1.9" height="2" fill="#858585"/><rect x="3.2" y="12" width="1.7" height="2" fill="#c9c9c9"/><rect x="1.9" y="16" width="2.2" height="2" fill="#fff"/><rect x="0" y="16" width="1.9" height="2" fill="#858585"/><rect x="3.2" y="16" width="1.7" height="2" fill="#c9c9c9"/><rect x="1.9" y="20" width="2.2" height="2" fill="#fff"/><rect x="0" y="20" width="1.9" height="2" fill="#858585"/><rect x="3.2" y="20" width="1.7" height="2" fill="#c9c9c9"/><rect x="1.9" y="24" width="2.2" height="2" fill="#fff"/><rect x="0" y="24" width="1.9" height="2" fill="#858585"/><rect x="3.2" y="24" width="1.7" height="2" fill="#c9c9c9"/><rect x="8" y="5.1" width="13.9" height="1.9" fill="#8a8a8a"/><rect x="7" y="10" width="15.8" height="1" fill="#999"/><rect x="7" y="12" width="15.8" height="1" fill="#999"/><rect x="7" y="14" width="8.9" height="1" fill="#999"/><rect x="7" y="16.3" width="12" height="10" fill="#efefef"/><path d="M8.3,25 L12.6,20.3" fill="none" stroke="#2f9e6c" stroke-width="2.3"/><polygon points="10.2,18.9 14.3,18.5 13.9,22.8" fill="#2f9e6c"/><g transform="translate(14.8,16.6) scale(1.0)"><path d="M3.2,0 L17.4,0 L17.4,12.4 L14.2,15.5 L0,15.5 L0,3.8 Z" fill="#fbf6ec" stroke="#fbf6ec" stroke-width="1.6" stroke-linejoin="round"/><polygon points="3.4,0.3 16.9,0.3 13.8,3.8 0.4,3.8" fill="#e0b45d"/><rect x="0.3" y="4.5" width="13.1" height="10.8" rx="0.6" fill="#d8a94e"/><polygon points="14.3,4.4 17.2,0.9 17.2,12.3 14.3,15.3" fill="#e0b45d"/><polygon points="7.8,0.3 10.8,0.3 8.2,3.8 5.3,3.8" fill="#fff"/><rect x="5.4" y="3.8" width="2.7" height="5.2" fill="#fff"/></g></svg>
<svg style="left:520px;top:63px" width="33" height="33" viewBox="0 0 33 33" ><rect x="2.95" y="0.95" width="23.1" height="27.9" fill="#fff" stroke="#e8aa4b" stroke-width="1.9"/><rect x="1.9" y="4" width="2.2" height="2" fill="#fff"/><rect x="0" y="4" width="1.9" height="2" fill="#858585"/><rect x="3.2" y="4" width="1.7" height="2" fill="#c9c9c9"/><rect x="1.9" y="8" width="2.2" height="2" fill="#fff"/><rect x="0" y="8" width="1.9" height="2" fill="#858585"/><rect x="3.2" y="8" width="1.7" height="2" fill="#c9c9c9"/><rect x="1.9" y="12" width="2.2" height="2" fill="#fff"/><rect x="0" y="12" width="1.9" height="2" fill="#858585"/><rect x="3.2" y="12" width="1.7" height="2" fill="#c9c9c9"/><rect x="1.9" y="16" width="2.2" height="2" fill="#fff"/><rect x="0" y="16" width="1.9" height="2" fill="#858585"/><rect x="3.2" y="16" width="1.7" height="2" fill="#c9c9c9"/><rect x="1.9" y="20" width="2.2" height="2" fill="#fff"/><rect x="0" y="20" width="1.9" height="2" fill="#858585"/><rect x="3.2" y="20" width="1.7" height="2" fill="#c9c9c9"/><rect x="1.9" y="24" width="2.2" height="2" fill="#fff"/><rect x="0" y="24" width="1.9" height="2" fill="#858585"/><rect x="3.2" y="24" width="1.7" height="2" fill="#c9c9c9"/><rect x="6.1" y="3.2" width="17.6" height="24.6" fill="#cfcfcf"/><rect x="6.7" y="3.7" width="10.2" height="3.4" rx="0.6" fill="#fff"/><rect x="17.9" y="3.7" width="5.2" height="3.4" rx="0.6" fill="#fff"/><rect x="8" y="4.9" width="6.3" height="1" fill="#666"/><rect x="19" y="4.9" width="3" height="1" fill="#666"/><rect x="6.7" y="7.7" width="10.2" height="3.4" rx="0.6" fill="#fff"/><rect x="17.9" y="7.7" width="5.2" height="3.4" rx="0.6" fill="#fff"/><rect x="8" y="8.9" width="7.2" height="1" fill="#666"/><rect x="20" y="8.9" width="2" height="1" fill="#666"/><rect x="6.7" y="11.7" width="10.2" height="3.4" rx="0.6" fill="#fff"/><rect x="17.9" y="11.7" width="5.2" height="3.4" rx="0.6" fill="#fff"/><rect x="8" y="12.899999999999999" width="8.1" height="1" fill="#666"/><rect x="19" y="12.899999999999999" width="3" height="1" fill="#c9341f"/><rect x="6.7" y="15.7" width="10.2" height="3.4" rx="0.6" fill="#fff"/><rect x="17.9" y="15.7" width="5.2" height="3.4" rx="0.6" fill="#fff"/><rect x="8" y="16.9" width="3" height="1" fill="#666"/><rect x="6.7" y="19.7" width="10.2" height="3.4" rx="0.6" fill="#fff"/><rect x="17.9" y="19.7" width="5.2" height="3.4" rx="0.6" fill="#fff"/><rect x="8" y="20.9" width="6.5" height="1" fill="#666"/><rect x="6.7" y="23.7" width="10.2" height="3.4" rx="0.6" fill="#fff"/><rect x="17.9" y="23.7" width="5.2" height="3.4" rx="0.6" fill="#fff"/><rect x="8" y="24.9" width="6.5" height="1" fill="#666"/><g transform="translate(14.8,16.6) scale(1.0)"><path d="M3.2,0 L17.4,0 L17.4,12.4 L14.2,15.5 L0,15.5 L0,3.8 Z" fill="#fbf6ec" stroke="#fbf6ec" stroke-width="1.6" stroke-linejoin="round"/><polygon points="3.4,0.3 16.9,0.3 13.8,3.8 0.4,3.8" fill="#e0b45d"/><rect x="0.3" y="4.5" width="13.1" height="10.8" rx="0.6" fill="#d8a94e"/><polygon points="14.3,4.4 17.2,0.9 17.2,12.3 14.3,15.3" fill="#e0b45d"/><polygon points="7.8,0.3 10.8,0.3 8.2,3.8 5.3,3.8" fill="#fff"/><rect x="5.4" y="3.8" width="2.7" height="5.2" fill="#fff"/></g></svg>
<svg style="left:578px;top:63px" width="34" height="34" viewBox="0 0 34 34" ><path d="M1,2.4 Q1,1.1 2.4,1.1 L15,1.1 L32,18.2 L32,20.5 L27,24 L14.8,28 L1,14.6 Z" fill="#2f6cb2"/><polygon points="13.6,4.9 24.4,15.9 14.7,23.4 4.8,13.4" fill="#fff"/><circle cx="5.5" cy="5.6" r="1.5" fill="#fff"/><path d="M13,10.2 L18.8,15.7 M10,13.1 L16.8,19.6" stroke="#888" stroke-width="0.8" fill="none"/><g transform="translate(16.2,17.2)"><rect x="3.0" y="-0.8" width="9.7" height="6.1" fill="#f3f3f3"/><rect x="-0.8" y="3.3" width="17.3" height="8.9" fill="#f3f3f3"/><rect x="2.0999999999999996" y="10.7" width="11.4" height="4.8999999999999995" fill="#f3f3f3"/><rect x="4.3" y="0.5" width="7.1" height="4.1" fill="#fff" stroke="#6e6e6e" stroke-width="1"/><path d="M0,4.5 Q0,4.1 0.4,4.1 L2,4.1 L2,6.6 L13.7,6.6 L13.7,4.1 L15.299999999999999,4.1 Q15.7,4.1 15.7,4.5 L15.7,10.999999999999998 Q15.7,11.399999999999999 15.299999999999999,11.399999999999999 L0.4,11.399999999999999 Q0,11.399999999999999 0,10.999999999999998 Z" fill="#6e6e6e"/><rect x="2.8" y="3.9" width="9.9" height="2.7" fill="#3b76b4"/><rect x="1.2" y="9.7" width="1.8" height="0.9" fill="#fff"/><rect x="3.4" y="10.7" width="8.8" height="3.5999999999999996" fill="#fff" stroke="#6e6e6e" stroke-width="1"/><rect x="5.0" y="12.421999999999999" width="5.6000000000000005" height="0.9" fill="#7ea6d6"/></g></svg>
<svg style="left:661px;top:63px" width="33" height="33" viewBox="0 0 33 33" ><rect x="2.95" y="0.95" width="23.1" height="27.9" fill="#fff" stroke="#2f6cb2" stroke-width="1.9"/><rect x="1.9" y="4" width="2.2" height="2" fill="#fff"/><rect x="0" y="4" width="1.9" height="2" fill="#858585"/><rect x="3.2" y="4" width="1.7" height="2" fill="#c9c9c9"/><rect x="1.9" y="8" width="2.2" height="2" fill="#fff"/><rect x="0" y="8" width="1.9" height="2" fill="#858585"/><rect x="3.2" y="8" width="1.7" height="2" fill="#c9c9c9"/><rect x="1.9" y="12" width="2.2" height="2" fill="#fff"/><rect x="0" y="12" width="1.9" height="2" fill="#858585"/><rect x="3.2" y="12" width="1.7" height="2" fill="#c9c9c9"/><rect x="1.9" y="16" width="2.2" height="2" fill="#fff"/><rect x="0" y="16" width="1.9" height="2" fill="#858585"/><rect x="3.2" y="16" width="1.7" height="2" fill="#c9c9c9"/><rect x="1.9" y="20" width="2.2" height="2" fill="#fff"/><rect x="0" y="20" width="1.9" height="2" fill="#858585"/><rect x="3.2" y="20" width="1.7" height="2" fill="#c9c9c9"/><rect x="1.9" y="24" width="2.2" height="2" fill="#fff"/><rect x="0" y="24" width="1.9" height="2" fill="#858585"/><rect x="3.2" y="24" width="1.7" height="2" fill="#c9c9c9"/><rect x="8" y="5.1" width="13.9" height="1.9" fill="#8a8a8a"/><rect x="7" y="10" width="15.8" height="1" fill="#999"/><rect x="7" y="12" width="15.8" height="1" fill="#999"/><rect x="7" y="14" width="8.9" height="1" fill="#999"/><rect x="7" y="16.3" width="12" height="10" fill="#efefef"/><path d="M8.2,25.1 L12.6,19.8 L15.5,24 L18.7,19.8" fill="none" stroke="#2f9e6c" stroke-width="2.2"/><path d="M17.1,30.124 C17.1,26.555 18.888,24.895 22.464000000000002,23.65 L26.636000000000003,23.65 C30.212000000000003,24.895 32.0,26.555 32.0,30.124 C32.0,31.369 30.957,31.95 29.765,31.95 L19.335,31.95 C18.143,31.95 17.1,31.369 17.1,30.124 Z" fill="#f3f3f3" stroke="#f3f3f3" stroke-width="1.6"/><circle cx="24.6" cy="18.4" r="5.0" fill="#f3f3f3"/><path d="M17.1,30.124 C17.1,26.555 18.888,24.895 22.464000000000002,23.65 L26.636000000000003,23.65 C30.212000000000003,24.895 32.0,26.555 32.0,30.124 C32.0,31.369 30.957,31.95 29.765,31.95 L19.335,31.95 C18.143,31.95 17.1,31.369 17.1,30.124 Z" fill="#737373"/><circle cx="24.6" cy="18.4" r="4.2" fill="#737373"/><polygon points="22.017,23.349999999999998 27.083000000000002,23.349999999999998 24.55,31.618" fill="#fff"/><polygon points="23.55,24.15 25.55,24.15 25.45,28.215 24.55,30.622 23.650000000000002,28.215" fill="#c9341f"/></svg>
<svg style="left:736px;top:63px" width="33" height="33" viewBox="0 0 33 33" ><rect x="2.95" y="0.95" width="23.1" height="27.9" fill="#fff" stroke="#2f6cb2" stroke-width="1.9"/><rect x="1.9" y="4" width="2.2" height="2" fill="#fff"/><rect x="0" y="4" width="1.9" height="2" fill="#858585"/><rect x="3.2" y="4" width="1.7" height="2" fill="#c9c9c9"/><rect x="1.9" y="8" width="2.2" height="2" fill="#fff"/><rect x="0" y="8" width="1.9" height="2" fill="#858585"/><rect x="3.2" y="8" width="1.7" height="2" fill="#c9c9c9"/><rect x="1.9" y="12" width="2.2" height="2" fill="#fff"/><rect x="0" y="12" width="1.9" height="2" fill="#858585"/><rect x="3.2" y="12" width="1.7" height="2" fill="#c9c9c9"/><rect x="1.9" y="16" width="2.2" height="2" fill="#fff"/><rect x="0" y="16" width="1.9" height="2" fill="#858585"/><rect x="3.2" y="16" width="1.7" height="2" fill="#c9c9c9"/><rect x="1.9" y="20" width="2.2" height="2" fill="#fff"/><rect x="0" y="20" width="1.9" height="2" fill="#858585"/><rect x="3.2" y="20" width="1.7" height="2" fill="#c9c9c9"/><rect x="1.9" y="24" width="2.2" height="2" fill="#fff"/><rect x="0" y="24" width="1.9" height="2" fill="#858585"/><rect x="3.2" y="24" width="1.7" height="2" fill="#c9c9c9"/><rect x="8" y="5.1" width="13.9" height="1.9" fill="#8a8a8a"/><rect x="7" y="10" width="15.8" height="1" fill="#999"/><rect x="7" y="12" width="15.8" height="1" fill="#999"/><rect x="7" y="14" width="8.9" height="1" fill="#999"/><rect x="7" y="16.3" width="12" height="10" fill="#efefef"/><rect x="19.9" y="16.9" width="2.1" height="0.9" fill="#2f9e6c"/><rect x="8.2" y="18.2" width="24.6" height="14.6" fill="#f3f3f3"/><rect x="9.65" y="19.65" width="21.7" height="11.7" fill="#fff" stroke="#2f9e6c" stroke-width="1.3"/><path d="M10.3,20.3 l2.6,0 a2.6,2.6 0 0 1 -2.6,2.6 Z" fill="#2f9e6c"/><path d="M30.7,20.3 l-2.6,0 a2.6,2.6 0 0 1 2.6,2.6 Z" fill="#2f9e6c"/><path d="M10.3,30.7 l2.6,0 a2.6,2.6 0 0 1 -2.6,-2.6 Z" fill="#2f9e6c"/><path d="M30.7,30.7 l-2.6,0 a2.6,2.6 0 0 1 2.6,-2.6 Z" fill="#2f9e6c"/><circle cx="20.5" cy="25.2" r="3.9" fill="#2f9e6c"/><path d="M22.1,23.8 C22.1,22.5 18.9,22.5 18.9,24 C18.9,25.5 22.2,25 22.2,26.5 C22.2,28 18.8,27.9 18.8,26.6" fill="none" stroke="#fff" stroke-width="1.1"/><path d="M20.5,21.9 L20.5,28.5" stroke="#fff" stroke-width="0.8"/></svg>
<svg style="left:11px;top:192px" width="14" height="14" viewBox="0 0 14 14" ><path d="M0,0.6 Q0,0 0.6,0 L4.6,0 L5.8,0.9 L5.8,12.9 L4.6,13.8 L0.6,13.8 Q0,13.8 0,13.2 Z" fill="#3b76b4"/><rect x="1.2" y="2" width="2.7" height="6.8" fill="#fff"/><rect x="1.4" y="10.4" width="2.3" height="2.3" fill="none" stroke="#bcd2ea" stroke-width="0.8"/><path d="M7,0.6 Q7,0 7.6,0 L11.6,0 L12.8,0.9 L12.8,12.9 L11.6,13.8 L7.6,13.8 Q7,13.8 7,13.2 Z" fill="#3b76b4"/><rect x="8.2" y="2" width="2.7" height="6.8" fill="#fff"/><rect x="8.4" y="10.4" width="2.3" height="2.3" fill="none" stroke="#bcd2ea" stroke-width="0.8"/></svg>
<svg style="left:149px;top:191px" width="17" height="17" viewBox="0 0 17 17" ><rect x="6.2" y="0" width="8.7" height="5.8" fill="#3b76b4"/><path d="M1.2,2 L5,2 L5,4.5 L6.2,4.5 L6.2,8 L3,10 L0,10.8 L0,4 Z" fill="#3b76b4"/><polygon points="1.4,2.8 4.1,2.8 4.1,6 0.8,6" fill="#fff"/><circle cx="3.4" cy="11.4" r="2.2" fill="#f0f0f0"/><circle cx="3.4" cy="11.4" r="1.6" fill="#3b76b4"/><g transform="translate(6,7)"><rect x="-0.6" y="-0.6" width="11.2" height="10" fill="#f4efe4"/><polygon points="1.6,0 10,0 8,2.3 0,2.3" fill="#e0b45d"/><rect x="0" y="3" width="7.2" height="5.8" fill="#d8a94e"/><polygon points="8.2,2.8 10,0.6 10,7 8.2,8.8" fill="#e0b45d"/><polygon points="4.5,0 6.8,0 5.2,2.6 2.9,2.6" fill="#fff"/><rect x="2.9" y="2.4" width="2.3" height="3.6" fill="#fff"/></g></svg>
<svg style="left:330px;top:192px" width="17" height="16" viewBox="0 0 17 16" ><g transform="translate(0,0) scale(0.93)"><polygon points="3.4,0.3 16.9,0.3 13.8,3.8 0.4,3.8" fill="#e0b45d"/><rect x="0.3" y="4.5" width="13.1" height="10.8" rx="0.6" fill="#d8a94e"/><polygon points="14.3,4.4 17.2,0.9 17.2,12.3 14.3,15.3" fill="#e0b45d"/><polygon points="7.8,0.3 10.8,0.3 8.2,3.8 5.3,3.8" fill="#fff"/><rect x="5.4" y="3.8" width="2.7" height="5.2" fill="#fff"/></g></svg>
<svg style="left:431px;top:191px" width="16" height="16" viewBox="0 0 16 16" ><rect x="2" y="1" width="12" height="13.8" fill="#fff" stroke="#2f6cb2" stroke-width="2"/><rect x="0.9" y="2.5" width="2.2" height="1" fill="#fff"/><rect x="0.9" y="6.4" width="2.2" height="1" fill="#fff"/><rect x="0.9" y="10.5" width="2.2" height="1" fill="#fff"/><rect x="0" y="3.3" width="3.8" height="1.4" fill="#9a9a9a"/><rect x="1.4" y="3.3" width="1.2" height="1.4" fill="#e6e6e6"/><rect x="0" y="7.2" width="3.8" height="1.4" fill="#9a9a9a"/><rect x="1.4" y="7.2" width="1.2" height="1.4" fill="#e6e6e6"/><rect x="0" y="11.3" width="3.8" height="1.4" fill="#9a9a9a"/><rect x="1.4" y="11.3" width="1.2" height="1.4" fill="#e6e6e6"/><rect x="5" y="4.05" width="6.8" height="0.9" fill="#8c8c8c"/><rect x="5" y="6.05" width="5.8" height="0.9" fill="#8c8c8c"/><rect x="5" y="8.950000000000001" width="6.8" height="0.9" fill="#8c8c8c"/><rect x="5" y="11.05" width="5.8" height="0.9" fill="#8c8c8c"/></svg>
<svg style="left:579px;top:191px" width="16" height="16" viewBox="0 0 16 16" ><rect x="0" y="0" width="16" height="16" fill="#fff"/><rect x="1" y="1" width="4" height="4" fill="#f04e1f"/><rect x="6" y="1" width="4" height="4" fill="#f04e1f"/><rect x="11" y="1" width="4" height="4" fill="#00a1e9"/><rect x="1" y="6" width="4" height="4" fill="#f04e1f"/><rect x="6" y="6" width="4" height="4" fill="#00a1e9"/><rect x="11" y="6" width="4" height="4" fill="#7fba00"/><rect x="1" y="11" width="4" height="4" fill="#00a1e9"/><rect x="6" y="11" width="4" height="4" fill="#7fba00"/><rect x="11" y="11" width="4" height="4" fill="#7fba00"/></svg>
<svg style="left:3px;top:220px" width="17" height="17" viewBox="0 0 17 17" ><g transform="translate(0,0)"><rect x="4.5" y="0.5" width="7" height="4" fill="#fff" stroke="#6e6e6e" stroke-width="1"/><path d="M0,4.3 Q0,3.9 0.4,3.9 L2,3.9 L2,6.7 L14,6.7 L14,3.9 L15.6,3.9 Q16,3.9 16,4.3 L16,11.299999999999999 Q16,11.7 15.6,11.7 L0.4,11.7 Q0,11.7 0,11.299999999999999 Z" fill="#6e6e6e"/><rect x="3" y="3" width="10.2" height="3.7" fill="#3b76b4"/><rect x="1.2" y="10.0" width="1.8" height="0.9" fill="#fff"/><rect x="4.5" y="10.9" width="7" height="4.5" fill="#fff" stroke="#6e6e6e" stroke-width="1"/><rect x="6.1" y="13.0" width="3.8" height="0.9" fill="#7ea6d6"/></g></svg>
<svg style="left:70px;top:226px" width="8" height="4"><polygon points="0,0 7.4,0 3.7,3.8" fill="#111"/></svg>
<svg style="left:89px;top:221px" width="14" height="14" viewBox="0 0 14 14" ><rect x="0" y="0" width="4" height="4" fill="#3674b5"/><rect x="5" y="0" width="4" height="4" fill="#3674b5"/><rect x="10" y="0" width="4" height="4" fill="#3674b5"/><rect x="0" y="5" width="4" height="4" fill="#3674b5"/><rect x="5" y="5" width="4" height="4" fill="#3674b5"/><rect x="10" y="5" width="4" height="4" fill="#3674b5"/><rect x="0" y="10" width="4" height="4" fill="#3674b5"/><rect x="5" y="10" width="4" height="4" fill="#3674b5"/><rect x="10" y="10" width="4" height="4" fill="#3674b5"/></svg>
<svg style="left:112px;top:221px" width="14" height="14" viewBox="0 0 14 14" ><rect x="0" y="0" width="4" height="4" fill="#3674b5"/><rect x="5" y="0" width="4" height="4" fill="#3674b5"/><rect x="10" y="0" width="4" height="4" fill="#3674b5"/><rect x="0" y="5" width="4" height="4" fill="#3674b5"/><rect x="0" y="10" width="4" height="4" fill="#3674b5"/></svg>
<div class="a" style="left:201px;top:218px;width:11px;height:21px;background:#f0f0f0;"></div>
<svg style="left:204px;top:227px" width="6" height="4"><polygon points="0,0 5.4,0 2.7,3" fill="#111"/></svg>
<svg style="left:223px;top:219px" width="17" height="17" viewBox="0 0 17 17" ><rect x="9" y="2.4" width="6.7" height="12.2" rx="0.8" fill="#fff" stroke="#1e6f42" stroke-width="1"/><rect x="10.4" y="4.1000000000000005" width="4.4" height="0.9" fill="#1e6f42"/><rect x="10.4" y="6.2" width="4.4" height="0.9" fill="#1e6f42"/><rect x="10.4" y="8.3" width="4.4" height="0.9" fill="#1e6f42"/><rect x="10.4" y="10.4" width="4.4" height="0.9" fill="#1e6f42"/><rect x="10.4" y="12.5" width="4.4" height="0.9" fill="#1e6f42"/><rect x="12.3" y="3" width="0.7" height="11" fill="#fff"/><polygon points="0,2.3 9.8,0.8 9.8,16.9 0,15.8" fill="#1e6f42"/><path d="M2.6,5 L7.2,13.2 M7.2,5 L2.6,13.2" stroke="#fff" stroke-width="1.7" fill="none"/></svg>
<svg style="left:251px;top:219px" width="17" height="17" viewBox="0 0 17 17" ><circle cx="9.9" cy="7.3" r="5.2" fill="#fff" stroke="#1f5fae" stroke-width="1.9"/><path d="M5.6,11.4 L1.2,15.6" stroke="#1f5fae" stroke-width="2.4" fill="none"/></svg>
<svg style="left:313px;top:219px" width="18" height="18" viewBox="0 0 18 18" ><polygon points="12.8,0.8 17.3,5.3 5.1,17.1 4.4,13 0.8,12.8" fill="#d04a32"/></svg>
<svg style="left:7px;top:160px" width="16" height="16" viewBox="0 0 16 16" ><circle cx="8" cy="8" r="7.3" fill="#fff" stroke="#2e9b6e" stroke-width="1.5"/><polygon points="2.9,8 8.1,3.7 7,7.15 13,7.15 13,8.85 7,8.85 8.1,12.3" fill="#2e9b6e"/></svg>
<svg style="left:32px;top:160px" width="16" height="16" viewBox="0 0 16 16" ><circle cx="8" cy="8" r="7.3" fill="#fff" stroke="#2e9b6e" stroke-width="1.5"/><g transform="translate(16,0) scale(-1,1)"><polygon points="2.9,8 8.1,3.7 7,7.15 13,7.15 13,8.85 7,8.85 8.1,12.3" fill="#2e9b6e"/></g></svg>
<svg style="left:1232px;top:164px" width="10" height="8"><path d="M0.3,0.2L9.5,7.8M9.5,0.2L0.3,7.8" stroke="#222" stroke-width="1.4" fill="none"/></svg>
<svg style="left:1233px;top:33px" width="16" height="16" viewBox="0 0 16 16" ><circle cx="8" cy="8" r="8" fill="#2b6cb3"/><path d="M5.3,6.3 C5.3,2.7 11,2.7 11,6 C11,8.2 8.05,8.2 8.05,10.5" fill="none" stroke="#fff" stroke-width="2"/><rect x="7" y="11.3" width="2.1" height="1.9" fill="#fff"/></svg>
<svg style="left:1211px;top:37px" width="11" height="7"><path d="M1,5.6L5.4,1.4L9.9,5.6" stroke="#6a6a6a" stroke-width="2" fill="none"/></svg>
<svg style="left:1237px;top:215px" width="16" height="18"><path d="M4.6,11.6L7.5,7.9L10.4,11.6" stroke="#4f4f4f" stroke-width="2.2" fill="none"/></svg>
<svg style="left:1237px;top:614px" width="16" height="18"><path d="M4.6,7.2L7.5,10.9L10.4,7.2" stroke="#4f4f4f" stroke-width="2.2" fill="none"/></svg>
<svg style="left:1px;top:632px" width="17" height="16"><path d="M10.4,4.6L6.3,7.5L10.4,10.4" stroke="#4f4f4f" stroke-width="2.2" fill="none"/></svg>
<svg style="left:1220px;top:632px" width="17" height="16"><path d="M5.9,4.6L10,7.5L5.9,10.4" stroke="#4f4f4f" stroke-width="2.2" fill="none"/></svg>
</body></html>
